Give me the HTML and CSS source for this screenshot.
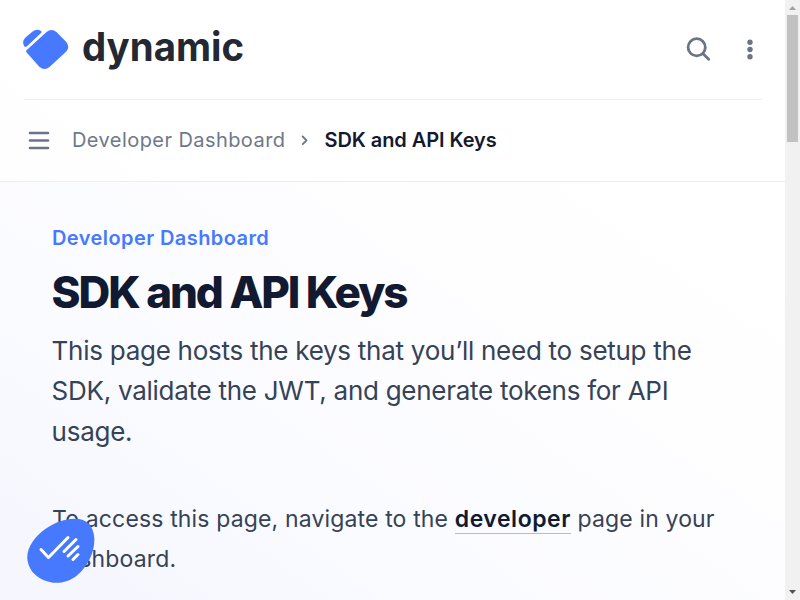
FILE: index.html
```html
<!DOCTYPE html>
<html lang="en">
<head>
<meta charset="utf-8">
<title>SDK and API Keys</title>
<link rel="stylesheet" href="styles.css">
</head>
<body>
<div class="page">
  <header class="header">
    <div class="topbar">
      <a class="brand">
        <svg class="brand-mark" width="46" height="41" viewBox="0 0 46 41"><path d="M1.300 17.200Q-1.600 12.500 2.500 8.500L9 3Q14 -1 18 2Q19.200 3 18 4.100L4.300 16.900Q2.300 18.600 1.300 17.200Z"/><path d="M3.500 21.200L23.500 3Q28.500 -1.200 33.500 3L43.300 13Q47.300 18 43.300 22.500L26.500 38Q21.500 42.200 16.500 38L3.500 23.200Q2.600 22.200 3.500 21.200Z"/></svg>
        <svg class="brand-name" width="164" height="50" viewBox="0 0 164 50"><text x="0" y="36" textLength="162" lengthAdjust="spacingAndGlyphs">dynamic</text></svg>
      </a>
      <div class="actions">
        <svg width="26" height="26" viewBox="0 0 26 26"><circle cx="10.700" cy="10.300" r="8.600"/><path d="M16.800 16.500L22.700 22.300"/></svg>
        <svg class="dots" width="8" height="22" viewBox="0 0 8 22"><circle cx="4" cy="3.200" r="2.700"/><circle cx="4" cy="10.500" r="2.700"/><circle cx="4" cy="17.800" r="2.700"/></svg>
      </div>
    </div>
    <nav class="crumbs">
      <svg class="menu" width="22" height="20" viewBox="0 0 22 20"><path d="M2 3H20M2 10.500H20M2 18H20"/></svg>
      <span class="parent">Developer Dashboard</span>
      <svg class="chevron" width="8" height="12" viewBox="0 0 8 12"><path d="M1.700 2.500L5.500 6.300L1.700 10.100"/></svg>
      <span class="current">SDK and API Keys</span>
    </nav>
  </header>
  <main class="content">
    <div class="eyebrow">Developer Dashboard</div>
    <h1>SDK and API Keys</h1>
    <p class="lead">This page hosts the keys that you’ll need to setup the<br>SDK, validate the JWT, and generate tokens for API<br>usage.</p>
    <p class="body-copy">To access this page, navigate to the <a>developer</a> page in your dashboard.</p>
  </main>
</div>
<div class="scrollbar">
  <svg width="15" height="15" viewBox="0 0 15 15"><path class="up" d="M4 10L7.500 6L11 10Z"/></svg>
  <div class="thumb"></div>
  <svg class="bottom" width="15" height="15" viewBox="0 0 15 15"><path d="M4 5H11L7.500 9Z"/></svg>
</div>
<svg class="consent" width="68" height="66" viewBox="0 0 68 66"><path class="blob" d="M47 .8C60 .5 66.500 8 67.300 20C68.200 34 60 49 50.500 57C43 63.500 34 65.500 26 64.700C12 62.500 2 54 .4 42C-1 30 8 18 19 10.500C29 4 38 1 47 .8Z"/><path class="tick" d="M14 31.500L21.500 39.500L41 19.500"/><path class="lines" d="M49 21.500L37 33.500M51 28.500L41 38M51 36.500L46 41.500"/></svg>
</body>
</html>
```
FILE: styles.css
```css
* { box-sizing: border-box; }
body {
  margin: 0;
  height: 600px;
  overflow: hidden;
  display: grid;
  grid-template-columns: 785px 15px;
  font-family: Inter, "Liberation Sans", sans-serif;
}
.page {
  height: 600px;
  overflow: hidden;
  background: linear-gradient(35deg, #f5f6fe 0%, #fafbff 28%, #fdfdff 50%, #fff 75%);
}
.header {
  height: 182px;
  border-bottom: 1px solid #ebedf0;
  background: rgba(255, 255, 255, .7);
}
.topbar {
  height: 100px;
  margin: 0 23px 0 24px;
  border-bottom: 1px solid #eeeff1;
  display: flex;
  justify-content: space-between;
  align-items: center;
}
.brand { display: flex; align-items: center; margin-left: -1px; }
.brand-mark { fill: #4779ff; }
.brand-name {
  margin-left: 13px;
  fill: #242833;
  font: 700 40px Inter, sans-serif;
  overflow: visible;
}
.actions { display: flex; align-items: center; gap: 34px; margin-right: 8px; }
.actions svg { fill: none; stroke: #6b7486; stroke-width: 2.8; stroke-linecap: round; }
.actions .dots { fill: #6b7486; stroke: none; }
.crumbs { height: 80px; padding-left: 28px; display: flex; align-items: center; font-size: 20px; }
.crumbs svg { fill: none; stroke: #6b7486; stroke-linecap: round; stroke-linejoin: round; }
.crumbs .menu { stroke-width: 2.6; }
.parent { margin-left: 22px; width: 213px; white-space: nowrap; letter-spacing: .43px; color: #6f788a; }
.crumbs .chevron { margin: 0 15.4px 0 16.1px; stroke-width: 1.8; }
.current { font-weight: 600; letter-spacing: -.07px; color: #111a30; white-space: nowrap; }
.content { padding: 40px 52px 0; }
.eyebrow { font-size: 20px; font-weight: 600; line-height: 32px; letter-spacing: .42px; color: #4779ff; }
h1 { margin: 10px 0 0 -.5px; font-size: 44px; line-height: 56px; font-weight: 800; letter-spacing: -2.07px; color: #111a30; }
.lead { margin: 11px 0 0 -.4px; font-size: 26px; line-height: 40.3px; letter-spacing: -.27px; color: #364256; white-space: nowrap; }
.body-copy { margin: 47px 0 0; font-size: 23px; line-height: 40px; letter-spacing: .15px; color: #364256; }
.body-copy a { font-weight: 600; letter-spacing: .53px; color: #111a30; border-bottom: 1px solid #a3bcff; }
.scrollbar { height: 600px; background: #f1f1f1; display: flex; flex-direction: column; }
.scrollbar svg { fill: #505050; flex: none; }
.scrollbar .up { fill: #a3a3a3; }
.thumb { width: 11px; height: 127px; margin-left: 2px; background: #c1c1c1; }
.scrollbar .bottom { margin-top: auto; }
.consent { position: absolute; left: 27px; top: 518px; }
.consent .blob { fill: #4779ff; }
.consent .tick, .consent .lines { fill: none; stroke: #fff; stroke-width: 3; stroke-linecap: round; stroke-linejoin: round; }
```
